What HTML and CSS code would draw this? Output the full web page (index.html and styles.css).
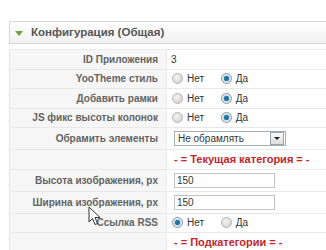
FILE: index.html
```html
<!DOCTYPE html>
<html lang="ru">
  <head>
    <meta charset="UTF-8" />
    <title>Конфигурация</title>
    <link rel="stylesheet" href="styles.css">
  </head>
  <body>
    <div class="pane">
      <h3 class="pane-toggler"><span class="arrow"></span>Конфигурация (Общая)</h3>

      <table class="admintable">
        <tr>
          <td class="key">ID Приложения</td>
          <td class="val">3</td>
        </tr>
        <tr>
          <td class="key">YooTheme стиль</td>
          <td class="val">
            <span class="radio"></span><span class="opt">Нет</span>
            <span class="radio on"></span><span class="opt">Да</span>
          </td>
        </tr>
        <tr>
          <td class="key">Добавить рамки</td>
          <td class="val">
            <span class="radio"></span><span class="opt">Нет</span>
            <span class="radio on"></span><span class="opt">Да</span>
          </td>
        </tr>
        <tr>
          <td class="key">JS фикс высоты колонок</td>
          <td class="val">
            <span class="radio"></span><span class="opt">Нет</span>
            <span class="radio on"></span><span class="opt">Да</span>
          </td>
        </tr>
        <tr>
          <td class="key">Обрамить элементы</td>
          <td class="val">
            <div class="select"><span>Не обрамлять</span><span class="drop"></span></div>
          </td>
        </tr>
        <tr>
          <td class="key"></td>
          <td class="val"><span class="section">- = Текущая категория = -</span></td>
        </tr>
        <tr class="input-row">
          <td class="key">Высота изображения, px</td>
          <td class="val"><input class="text" type="text" value="150"></td>
        </tr>
        <tr class="input-row">
          <td class="key">Ширина изображения, px</td>
          <td class="val"><input class="text" type="text" value="150"></td>
        </tr>
        <tr>
          <td class="key">Ссылка RSS</td>
          <td class="val">
            <span class="radio on"></span><span class="opt">Нет</span>
            <span class="radio"></span><span class="opt">Да</span>
          </td>
        </tr>
        <tr>
          <td class="key"></td>
          <td class="val"><span class="section">- = Подкатегории = -</span></td>
        </tr>
      </table>
    </div>

    <svg class="cursor" width="13" height="20" viewBox="0 0 13 20">
      <path d="M1 1 L1 16 L4.5 12.5 L7 18.5 L9.5 17.5 L7 11.5 L12 11.5 Z" fill="#fff" stroke="#333" stroke-width="1" stroke-linejoin="round"/>
    </svg>
  </body>
</html>
```

FILE: styles.css
```css
body {
  margin: 0;
  padding: 21px 0 0 9px;
  background: #fff;
  font-family: "Liberation Sans", Arial, sans-serif;
  font-size: 10px;
  color: #333;
  overflow: hidden;
  position: relative;
}

.pane {
  width: 420px;
}

.pane-toggler {
  margin: 0 0 5px;
  height: 21px;
  line-height: 21px;
  padding-left: 5px;
  border: 1px solid #d6d6d6;
  background: linear-gradient(#ffffff, #f1f1f1);
  font-size: 11.5px;
  font-weight: bold;
  color: #555;
  display: flex;
  align-items: center;
}

.arrow {
  width: 0;
  height: 0;
  border-left: 4px solid transparent;
  border-right: 4px solid transparent;
  border-top: 5px solid #6aa33f;
  margin: 1px 8px 0 0;
}

.admintable {
  border-collapse: collapse;
  border-left: 1px solid #e3e3e3;
  border-top: 1px solid #e9e9e9;
  width: 100%;
}

.admintable td {
  padding: 3px 5px 3px 4px;
  height: 12.5px;
  border-bottom: 1px solid #e9e9e9;
  vertical-align: middle;
}

.admintable .input-row td {
  height: 14px;
}

.admintable td.key {
  width: 144px;
  text-align: right;
  font-weight: bold;
  color: #636363;
  background: #f6f6f6;
  border-right: 1px solid #e9e9e9;
  padding-right: 8px;
}

.admintable td.val {
  padding-left: 4px;
  white-space: nowrap;
}

.radio {
  display: inline-block;
  width: 9px;
  height: 9px;
  border-radius: 50%;
  border: 1px solid #b5b5b5;
  background: radial-gradient(circle at 40% 35%, #f4f4f4, #cdcdcd);
  vertical-align: -2px;
  margin: 0 4px 0 1px;
}

.radio.on {
  border-color: #8a9aa6;
  background: radial-gradient(circle, #1f6d96 0, #2b7fae 2.5px, #c9dbe6 3px, #eef3f6 5px);
}

.opt {
  margin-right: 13px;
}

.select {
  width: 107px;
  height: 13px;
  border: 1px solid #a5acb2;
  margin-left: 3px;
  padding-left: 3px;
  display: flex;
  align-items: center;
  justify-content: space-between;
  background: #fff;
  line-height: 13px;
}

.drop {
  width: 12px;
  height: 11px;
  margin-right: 1px;
  border: 1px solid #9aa3ab;
  background: linear-gradient(#fafafa, #dcdcdc);
  position: relative;
}

.drop::after {
  content: "";
  position: absolute;
  left: 3px;
  top: 4px;
  border-left: 3px solid transparent;
  border-right: 3px solid transparent;
  border-top: 3px solid #222;
}

.section {
  margin-left: 3px;
  color: #c0262c;
  font-weight: bold;
  font-size: 11px;
}

.text {
  box-sizing: border-box;
  width: 101px;
  height: 15px;
  margin: 0 0 0 3px;
  padding: 0 2px;
  border: 1px solid #c3c3c3;
  font-family: "Liberation Sans", Arial, sans-serif;
  font-size: 10px;
  color: #333;
  vertical-align: middle;
}

.cursor {
  position: absolute;
  left: 88px;
  top: 206px;
}
```
